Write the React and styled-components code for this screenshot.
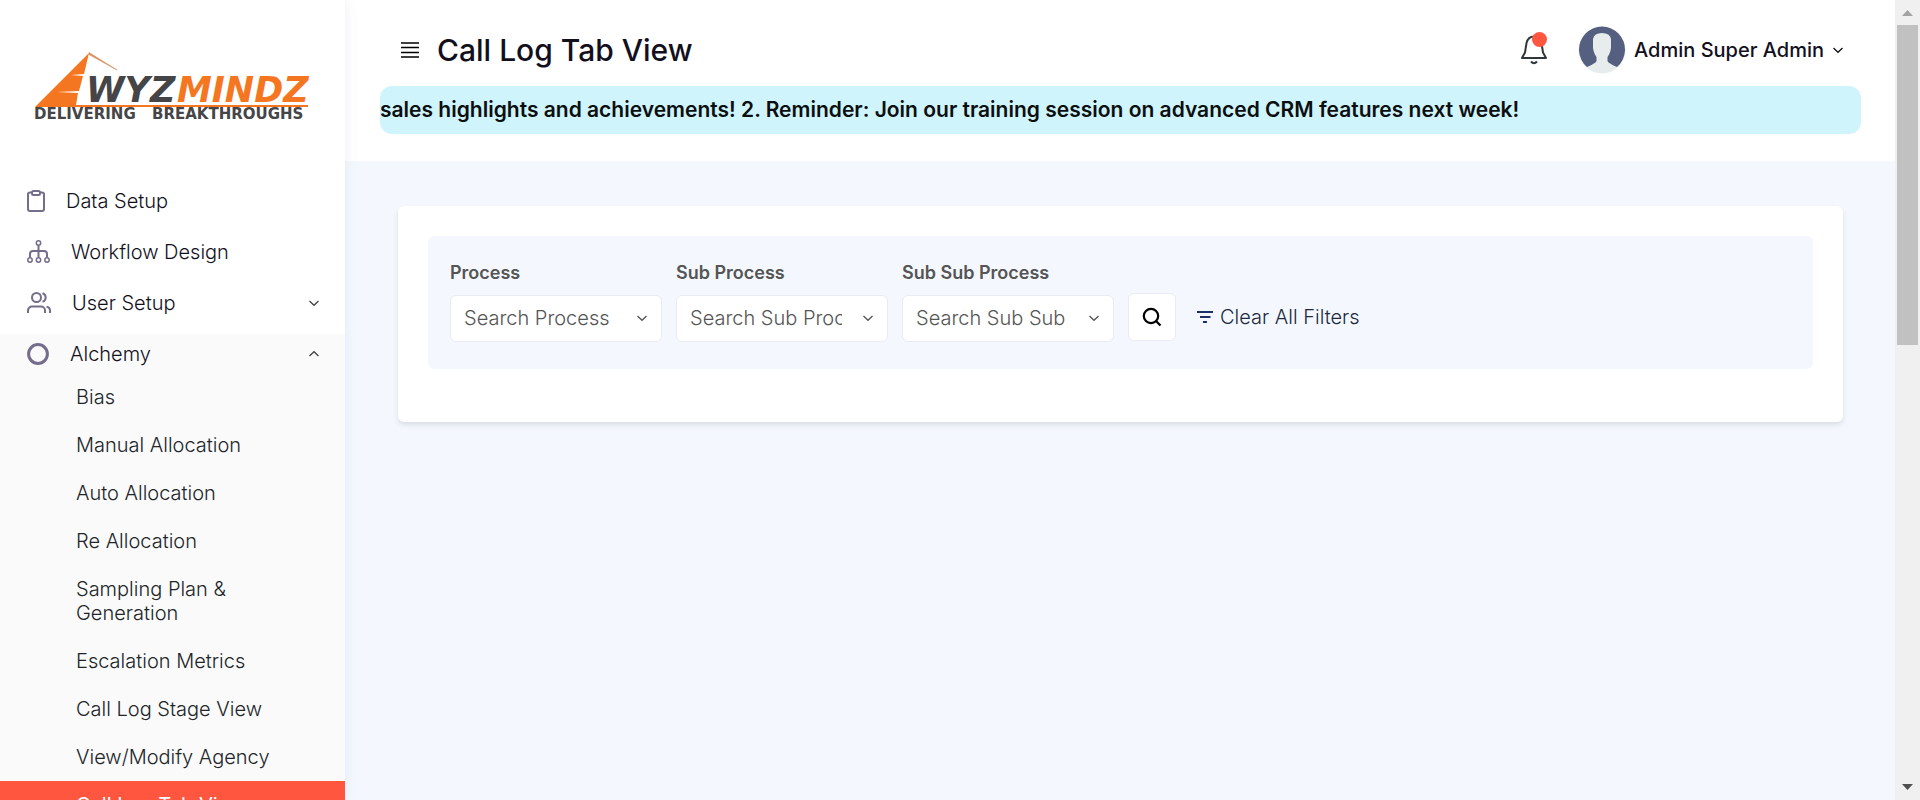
import React from "react";
import styled, { createGlobalStyle } from "styled-components";

const GlobalStyle = createGlobalStyle`
  * { box-sizing: border-box; }
  body { margin: 0; background: #f4f8fe; }
  body, button, select { font-family: Inter, "Liberation Sans", sans-serif; }
  h1, ul { margin: 0; padding: 0; }
  ul { list-style: none; }
  button { border: 0; padding: 0; background: none; cursor: pointer; color: inherit; }
  svg { display: block; flex: none; }
`;

const Shell = styled.div`
  display: flex;
  height: 100vh;
  overflow: hidden;
`;

const Sidebar = styled.aside`
  flex: 0 0 345px;
  overflow: hidden;
  background: #fff;
  box-shadow: 0 0 14px rgba(120, 130, 170, 0.12);
  z-index: 1;
`;

const Brand = styled.a`
  display: block;
  padding: 48px 0 0 32px;
  height: 181px;
`;

const MenuList = styled.ul`
  display: flex;
  flex-direction: column;
  gap: 12px;
`;

const MenuItem = styled.li`
  background: ${(p) => (p.$open ? "#fafafa" : "transparent")};
`;

const MenuLink = styled.a`
  display: flex;
  align-items: center;
  gap: 21px;
  height: 39px;
  padding: 0 25px 0 27px;
  color: #12101d;
  font-size: 20px;
  font-weight: 300;
  text-decoration: none;
  > svg:first-child { color: #746d8c; }
  > svg:last-child { color: #444; }
`;

const MenuLabel = styled.span`
  flex: 1;
`;

const SubLink = styled.a`
  display: block;
  padding: 12px 64px 12px 76px;
  font-size: 20px;
  line-height: 24px;
  font-weight: ${(p) => (p.$active ? 400 : 300)};
  color: ${(p) => (p.$active ? "#fff" : "#212529")};
  background: ${(p) => (p.$active ? "#ff5640" : "transparent")};
  text-decoration: none;
`;

const Page = styled.div`
  flex: 1;
  min-width: 0;
`;

const Header = styled.header`
  background: #fff;
  padding: 20px 34px 27px 35px;
`;

const HeaderRow = styled.div`
  display: flex;
  align-items: center;
  height: 60px;
  padding: 0 17px 0 20px;
`;

const Title = styled.h1`
  flex: 1;
  padding-left: 17px;
  font-size: 30px;
  line-height: 36px;
  font-weight: 500;
  color: #12101d;
`;

const BellButton = styled.button`
  position: relative;
  margin-right: 30px;
  color: #30373d;
`;

const Dot = styled.span`
  position: absolute;
  top: -3px;
  right: 1px;
  width: 15px;
  height: 15px;
  border-radius: 50%;
  background: #ff5640;
`;

const UserButton = styled.button`
  display: flex;
  align-items: center;
  gap: 8px;
  font-size: 20px;
  font-weight: 500;
  color: #12101d;
`;

const Ticker = styled.div`
  margin-top: 6px;
  overflow: hidden;
  white-space: nowrap;
  border-radius: 12px;
  background: #cff4fc;
  color: #0b0f10;
  font-size: 21px;
  line-height: 48px;
  font-weight: 600;
`;

const Content = styled.main`
  padding: 45px 52px 45px 53px;
`;

const Card = styled.section`
  padding: 30px 30px 53px;
  border-radius: 6px;
  background: #fff;
  box-shadow: 0 3px 5px rgba(30, 35, 60, 0.12);
`;

const FilterBar = styled.form`
  display: flex;
  align-items: flex-start;
  gap: 14px;
  padding: 26px 22px 27px;
  border-radius: 6px;
  background: #f4f8fe;
`;

const Field = styled.div`
  width: 212px;
`;

const FieldLabel = styled.label`
  display: block;
  font-size: 18px;
  line-height: 22px;
  font-weight: 600;
  color: #555;
`;

const SelectWrap = styled.div`
  position: relative;
  margin-top: 11px;
  color: #555;
  svg { position: absolute; right: 14px; top: 17px; pointer-events: none; }
`;

const Select = styled.select`
  display: block;
  width: 100%;
  height: 47px;
  padding: 0 45px 2px 13px;
  appearance: none;
  border: 1px solid #e8ebf3;
  border-radius: 6px;
  background: #fff;
  color: #555;
  font-size: 20px;
  font-weight: 300;
`;

const Actions = styled.div`
  display: flex;
  align-items: center;
  gap: 21px;
  padding-top: 31px;
`;

const SearchButton = styled.button`
  display: flex;
  align-items: center;
  justify-content: center;
  width: 48px;
  height: 48px;
  border: 1px solid #e8ebf3;
  border-radius: 6px;
  background: #fff;
  color: #000;
`;

const ClearButton = styled.button`
  display: flex;
  align-items: center;
  gap: 7px;
  font-size: 20px;
  font-weight: 300;
  color: #20293d;
  svg { color: #1b2f6b; }
`;

const ScrollTrack = styled.div`
  display: flex;
  flex-direction: column;
  align-items: center;
  flex: 0 0 25px;
  background: #f0f0f0;
`;

const ScrollThumb = styled.div`
  width: 21px;
  height: 40vh;
  margin-bottom: auto;
  background: #c1c1c1;
`;

function Logo() {
  return (
    <svg width="280" height="76" viewBox="32 48 280 76" role="img" aria-label="Wyzmindz Delivering Breakthroughs">
      <path d="M89 53 L84 74 L71 75 L83 76 L79 91 L57 92 L78 93 L76 105 H308 V107 H35 Z" fill="#f57621" />
      <path d="M89 52.500 L117 70 L89 54.500 Z" fill="#d98a58" stroke="#d98a58" strokeWidth="0.600" />
      <g fontFamily="DejaVu Sans, sans-serif" fontWeight="700">
        <text x="86" y="102" fontSize="35" fontStyle="italic" fill="#454547">WYZ</text>
        <text x="177" y="102" fontSize="35" fontStyle="italic" fill="#f57621">MINDZ</text>
        <text x="34" y="119" fontSize="15" fill="#454547">DELIVERING</text>
        <text x="152" y="119" fontSize="15" fill="#454547">BREAKTHROUGHS</text>
      </g>
    </svg>
  );
}

function Chevron({ up }) {
  return (
    <svg width="12" height="12" viewBox="0 0 12 12" fill="none" stroke="currentColor" strokeWidth="1.300" aria-hidden="true">
      <path d={up ? "M1.500 8 L6 3.700 L10.500 8" : "M1.500 4 L6 8.300 L10.500 4"} />
    </svg>
  );
}

const stroke = { fill: "none", stroke: "currentColor", "aria-hidden": true };

const icons = {
  clipboard: (
    <svg width="18" height="22" viewBox="0 0 18 22" {...stroke} strokeWidth="2">
      <rect x="1" y="2.500" width="16" height="18.500" rx="2" />
      <rect x="5" y="1" width="8" height="4" rx="1.500" fill="#fff" />
    </svg>
  ),
  workflow: (
    <svg width="23" height="23" viewBox="0 0 23 23" {...stroke} strokeWidth="1.500">
      <circle cx="11.500" cy="3" r="2.200" />
      <circle cx="3" cy="20" r="2.200" />
      <circle cx="11.500" cy="20" r="2.200" />
      <circle cx="20" cy="20" r="2.200" />
      <path d="M11.500 5.500V17.500M3 17.500V14Q3 11 6 11H17Q20 11 20 14V17.500" strokeWidth="2" />
    </svg>
  ),
  users: (
    <svg width="24" height="22" viewBox="0 0 24 22" {...stroke} strokeWidth="2">
      <circle cx="9.500" cy="5.500" r="4.500" />
      <path d="M1 21v-2.500a4 4 0 0 1 4-4h9a4 4 0 0 1 4 4V21M15.500 1.200a4.500 4.500 0 0 1 0 8.600M19.500 14.700a4 4 0 0 1 3.500 4V21" />
    </svg>
  ),
  circle: (
    <svg width="22" height="22" viewBox="0 0 22 22" {...stroke} strokeWidth="3">
      <circle cx="11" cy="11" r="9.400" />
    </svg>
  ),
};

const menu = [
  { label: "Data Setup", icon: "clipboard" },
  { label: "Workflow Design", icon: "workflow" },
  { label: "User Setup", icon: "users", expandable: true },
  {
    label: "Alchemy",
    icon: "circle",
    expandable: true,
    children: [
      "Bias",
      "Manual Allocation",
      "Auto Allocation",
      "Re Allocation",
      "Sampling Plan & Generation",
      "Escalation Metrics",
      "Call Log Stage View",
      "View/Modify Agency",
      "Call Log Tab View",
    ],
  },
];

const filters = [
  { id: "process", label: "Process" },
  { id: "sub-process", label: "Sub Process" },
  { id: "sub-sub-process", label: "Sub Sub Process" },
];

const currentPage = "Call Log Tab View";

export default function App() {
  return (
    <>
      <GlobalStyle />
      <Shell>
        <Sidebar>
          <Brand href="#"><Logo /></Brand>
          <nav>
            <MenuList>
              {menu.map((item) => (
                <MenuItem key={item.label} $open={!!item.children}>
                  <MenuLink href="#">
                    {icons[item.icon]}
                    <MenuLabel>{item.label}</MenuLabel>
                    {item.expandable && <Chevron up={!!item.children} />}
                  </MenuLink>
                  {item.children && (
                    <ul>
                      {item.children.map((name) => (
                        <li key={name}>
                          <SubLink href="#" $active={name === currentPage}>{name}</SubLink>
                        </li>
                      ))}
                    </ul>
                  )}
                </MenuItem>
              ))}
            </MenuList>
          </nav>
        </Sidebar>

        <Page>
          <Header>
            <HeaderRow>
              <button type="button" aria-label="Toggle menu">
                <svg width="20" height="16" viewBox="0 0 20 16" {...stroke} strokeWidth="1.500">
                  <path d="M1 1H19M1 5.500H19M1 10.500H19M1 15H19" />
                </svg>
              </button>
              <Title>{currentPage}</Title>
              <BellButton type="button" aria-label="Notifications">
                <svg width="28" height="30" viewBox="0 0 28 30" {...stroke} strokeWidth="2">
                  <path d="M2 23H26L23 17.500L21.500 8C20.500 4 18 1.500 14 1.500S7.500 4 6.500 8L5 17.500Z" strokeLinejoin="round" />
                  <path d="M11 26.500Q14 30 17 26.500" />
                </svg>
                <Dot />
              </BellButton>
              <UserButton type="button">
                <svg width="48" height="48" viewBox="0 0 48 48" aria-hidden="true">
                  <circle cx="24" cy="24" r="23.500" fill="#e7eded" />
                  <path d="M9 41A23 23 0 1 1 39 41Q30 37 29.500 35V31Q32 28 33 22V13Q32 7 24 7T15 13V22Q16 28 18.500 31V35Q18 37 9 41Z" fill="#556080" />
                </svg>
                <span>Admin Super Admin</span>
                <Chevron />
              </UserButton>
            </HeaderRow>
            <Ticker>
              sales highlights and achievements! 2. Reminder: Join our training session on advanced CRM features next week!
            </Ticker>
          </Header>

          <Content>
            <Card>
              <FilterBar>
                {filters.map(({ id, label }) => (
                  <Field key={id}>
                    <FieldLabel htmlFor={id}>{label}</FieldLabel>
                    <SelectWrap>
                      <Select id={id}>
                        <option>Search {label}</option>
                      </Select>
                      <Chevron />
                    </SelectWrap>
                  </Field>
                ))}
                <Actions>
                  <SearchButton type="button" aria-label="Search">
                    <svg width="20" height="20" viewBox="0 0 20 20" {...stroke} strokeWidth="2.200">
                      <circle cx="9" cy="9" r="7.200" />
                      <path d="M13.500 13.500L18.500 18.500" />
                    </svg>
                  </SearchButton>
                  <ClearButton type="reset">
                    <svg width="16" height="12" viewBox="0 0 16 12" {...stroke} strokeWidth="2">
                      <path d="M0 1H16M3 6H13.500M6 11H10" />
                    </svg>
                    Clear All Filters
                  </ClearButton>
                </Actions>
              </FilterBar>
            </Card>
          </Content>
        </Page>

        <ScrollTrack aria-hidden="true">
          <svg width="25" height="25" viewBox="0 0 25 25"><path d="M7 16L12.500 10L18 16Z" fill="#a3a3a3" /></svg>
          <ScrollThumb />
          <svg width="25" height="25" viewBox="0 0 25 25"><path d="M7 9L12.500 15L18 9Z" fill="#505050" /></svg>
        </ScrollTrack>
      </Shell>
    </>
  );
}
